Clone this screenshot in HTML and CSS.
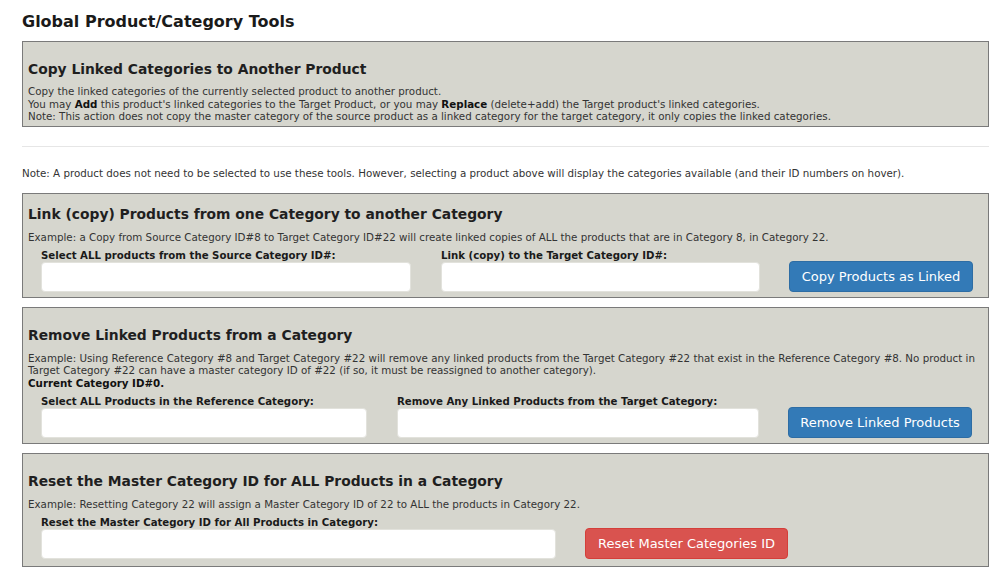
FILE: index.html
```html
<!DOCTYPE html>
<html>
<head>
<meta charset="utf-8">
<link rel="stylesheet" href="styles.css">
</head>
<body>
<div class="page">
  <h1 class="title">Global Product/Category Tools</h1>

  <div class="box box-first">
    <h2 class="box-title">Copy Linked Categories to Another Product</h2>
    <p class="text">Copy the linked categories of the currently selected product to another product.<br>
    You may <b>Add</b> this product's linked categories to the Target Product, or you may <b>Replace</b> (delete+add) the Target product's linked categories.<br>
    Note: This action does not copy the master category of the source product as a linked category for the target category, it only copies the linked categories.</p>
  </div>

  <hr class="rule">

  <p class="note">Note: A product does not need to be selected to use these tools. However, selecting a product above will display the categories available (and their ID numbers on hover).</p>

  <div class="box box-link">
    <h2 class="box-title">Link (copy) Products from one Category to another Category</h2>
    <p class="text">Example: a Copy from Source Category ID#8 to Target Category ID#22 will create linked copies of ALL the products that are in Category 8, in Category 22.</p>
    <div class="row">
      <div class="field">
        <label class="label">Select ALL products from the Source Category ID#:</label>
        <input class="input w370" type="text">
      </div>
      <div class="field">
        <label class="label">Link (copy) to the Target Category ID#:</label>
        <input class="input w319" type="text">
      </div>
      <button class="btn btn-blue w184">Copy Products as Linked</button>
    </div>
  </div>

  <div class="box box-remove">
    <h2 class="box-title">Remove Linked Products from a Category</h2>
    <p class="text">Example: Using Reference Category #8 and Target Category #22 will remove any linked products from the Target Category #22 that exist in the Reference Category #8. No product in Target Category #22 can have a master category ID of #22 (if so, it must be reassigned to another category).<br>
    <b>Current Category ID#0.</b></p>
    <div class="row row-tall">
      <div class="field">
        <label class="label">Select ALL Products in the Reference Category:</label>
        <input class="input w326" type="text">
      </div>
      <div class="field">
        <label class="label">Remove Any Linked Products from the Target Category:</label>
        <input class="input w362" type="text">
      </div>
      <button class="btn btn-blue w184">Remove Linked Products</button>
    </div>
  </div>

  <div class="box box-reset">
    <h2 class="box-title">Reset the Master Category ID for ALL Products in a Category</h2>
    <p class="text">Example: Resetting Category 22 will assign a Master Category ID of 22 to ALL the products in Category 22.</p>
    <div class="row">
      <div class="field">
        <label class="label">Reset the Master Category ID for All Products in Category:</label>
        <input class="input w515" type="text">
      </div>
      <button class="btn btn-red w203">Reset Master Categories ID</button>
    </div>
  </div>
</div>
</body>
</html>
```

FILE: styles.css
```css
html, body {
  margin: 0;
  padding: 0;
  background: #ffffff;
}

body {
  font-family: "DejaVu Sans", Verdana, sans-serif;
  color: #333333;
}

.page {
  width: 967px;
  margin-left: 22px;
  padding-top: 12px;
}

.title {
  margin: 0 0 9px 0;
  font-size: 16px;
  line-height: 20px;
  font-weight: bold;
  color: #1a1a1a;
}

.box {
  background: #d6d6ce;
  border: 1px solid #7a7a7a;
  padding: 0 5px 6px 5px;
}

.box-first {
  padding-top: 18px;
  padding-bottom: 3px;
}

.box-first .box-title {
  margin-bottom: 7px;
}

.box-link {
  padding-top: 11px;
  padding-bottom: 5px;
}

.box-remove {
  margin-top: 9px;
  padding-top: 18px;
  padding-bottom: 5px;
}

.box-reset {
  margin-top: 9px;
  padding-top: 18px;
  padding-bottom: 7px;
}

.box-title {
  margin: 0 0 8px 0;
  font-size: 13.85px;
  line-height: 18px;
  font-weight: bold;
  color: #1f1f1f;
}

.text {
  margin: 0;
  font-size: 10.3px;
  line-height: 12.5px;
  color: #333333;
}

.text b {
  color: #111111;
}

.rule {
  margin: 19px 0 0 0;
  border: 0;
  border-top: 1px solid #e6e6e6;
  height: 0;
}

.note {
  margin: 20px 0 14px 0;
  font-size: 10.3px;
  line-height: 12.5px;
  color: #333333;
}

.row {
  display: flex;
  align-items: flex-end;
  gap: 30px;
  padding-left: 13px;
  margin-top: 6px;
}

.row-tall {
  margin-top: 7px;
}

.field {
  display: flex;
  flex-direction: column;
}

.label {
  font-size: 10.2px;
  line-height: 12px;
  font-weight: bold;
  color: #1a1a1a;
  margin-bottom: 0;
}

.input {
  box-sizing: border-box;
  height: 30px;
  border: 1px solid #e2e2dc;
  border-radius: 4px;
  background: #ffffff;
  margin: 0;
  padding: 0 6px;
}

.w370 { width: 370px; }
.w319 { width: 319px; }
.w326 { width: 326px; }
.w362 { width: 362px; }
.w515 { width: 515px; }
.w184 { width: 184px; }
.w203 { width: 203px; }

.btn {
  box-sizing: border-box;
  height: 31px;
  margin-left: -1px;
  border-radius: 4px;
  font-family: "DejaVu Sans", Verdana, sans-serif;
  font-size: 13px;
  color: #ffffff;
  padding: 0 6px;
  cursor: pointer;
}

.btn-blue {
  background: #337ab7;
  border: 1px solid #2e6da4;
}

.btn-red {
  background: #d9534f;
  border: 1px solid #d43f3a;
}
```
